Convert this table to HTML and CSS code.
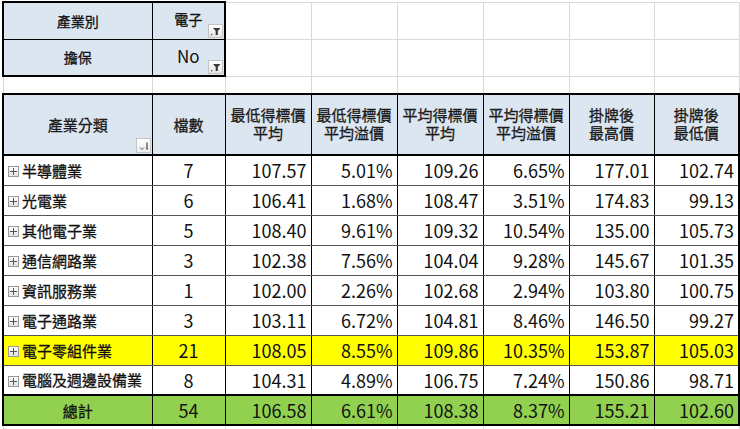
FILE: index.html
```html
<!DOCTYPE html>
<html lang="zh-Hant">
<head>
<meta charset="utf-8">
<title>產業分類</title>
<link rel="stylesheet" href="styles.css">
</head>
<body>
<table class="sheet">
  <colgroup>
    <col class="w-cat"><col class="w-cnt"><col class="w-n"><col class="w-n"><col class="w-n"><col class="w-n"><col class="w-n2"><col class="w-n3">
  </colgroup>
  <tr class="r-pf">
    <td class="pf pf-label">產業別</td>
    <td class="pf pf-value"><span class="cjk">電子</span><span class="filter"><svg width="13" height="12" viewBox="0 0 13 12"><path d="M4 3H11.5L8.8 6V10H6.7V6Z" fill="#3a3a3a"/><rect x="2" y="9" width="1.3" height="1.3" fill="#555"/></svg></span></td>
    <td class="blank"></td><td class="blank"></td><td class="blank"></td><td class="blank"></td><td class="blank"></td><td class="blank"></td>
  </tr>
  <tr class="r-pf">
    <td class="pf pf-label">擔保</td>
    <td class="pf pf-value"><span class="latin">No</span><span class="filter"><svg width="13" height="12" viewBox="0 0 13 12"><path d="M4 3H11.5L8.8 6V10H6.7V6Z" fill="#3a3a3a"/><rect x="2" y="9" width="1.3" height="1.3" fill="#555"/></svg></span></td>
    <td class="blank"></td><td class="blank"></td><td class="blank"></td><td class="blank"></td><td class="blank"></td><td class="blank"></td>
  </tr>
  <tr class="r-gap">
    <td class="blank"></td><td class="blank"></td><td class="blank"></td><td class="blank"></td><td class="blank"></td><td class="blank"></td><td class="blank"></td><td class="blank"></td>
  </tr>
  <tr class="r-head">
    <th class="h h-first">產業分類<span class="sortbtn"><svg width="13" height="13" viewBox="0 0 13 13"><path d="M3 8.5L5 10.5L7 8.5" fill="none" stroke="#555" stroke-width="1"/><path d="M10 3.5V9" stroke="#444" stroke-width="1.2"/><path d="M8.6 9.2H11.4L10 11Z" fill="#444"/></svg></span></th>
    <th class="h">檔數</th>
    <th class="h"><span class="hl">最低得標價</span><span class="hl">平均</span></th>
    <th class="h"><span class="hl">最低得標價</span><span class="hl">平均溢價</span></th>
    <th class="h"><span class="hl">平均得標價</span><span class="hl">平均</span></th>
    <th class="h"><span class="hl">平均得標價</span><span class="hl">平均溢價</span></th>
    <th class="h"><span class="hl">掛牌後</span><span class="hl">最高價</span></th>
    <th class="h h-last"><span class="hl">掛牌後</span><span class="hl">最低價</span></th>
  </tr>
  <tr class="r-data">
    <td class="cat"><span class="plus"></span>半導體業</td><td class="cnt">7</td><td class="num">107.57</td><td class="num">5.01%</td><td class="num">109.26</td><td class="num">6.65%</td><td class="num">177.01</td><td class="num last">102.74</td>
  </tr>
  <tr class="r-data">
    <td class="cat"><span class="plus"></span>光電業</td><td class="cnt">6</td><td class="num">106.41</td><td class="num">1.68%</td><td class="num">108.47</td><td class="num">3.51%</td><td class="num">174.83</td><td class="num last">99.13</td>
  </tr>
  <tr class="r-data">
    <td class="cat"><span class="plus"></span>其他電子業</td><td class="cnt">5</td><td class="num">108.40</td><td class="num">9.61%</td><td class="num">109.32</td><td class="num">10.54%</td><td class="num">135.00</td><td class="num last">105.73</td>
  </tr>
  <tr class="r-data">
    <td class="cat"><span class="plus"></span>通信網路業</td><td class="cnt">3</td><td class="num">102.38</td><td class="num">7.56%</td><td class="num">104.04</td><td class="num">9.28%</td><td class="num">145.67</td><td class="num last">101.35</td>
  </tr>
  <tr class="r-data">
    <td class="cat"><span class="plus"></span>資訊服務業</td><td class="cnt">1</td><td class="num">102.00</td><td class="num">2.26%</td><td class="num">102.68</td><td class="num">2.94%</td><td class="num">103.80</td><td class="num last">100.75</td>
  </tr>
  <tr class="r-data">
    <td class="cat"><span class="plus"></span>電子通路業</td><td class="cnt">3</td><td class="num">103.11</td><td class="num">6.72%</td><td class="num">104.81</td><td class="num">8.46%</td><td class="num">146.50</td><td class="num last">99.27</td>
  </tr>
  <tr class="r-data r-hl">
    <td class="cat"><span class="plus"></span>電子零組件業</td><td class="cnt">21</td><td class="num">108.05</td><td class="num">8.55%</td><td class="num">109.86</td><td class="num">10.35%</td><td class="num">153.87</td><td class="num last">105.03</td>
  </tr>
  <tr class="r-data">
    <td class="cat"><span class="plus"></span>電腦及週邊設備業</td><td class="cnt">8</td><td class="num">104.31</td><td class="num">4.89%</td><td class="num">106.75</td><td class="num">7.24%</td><td class="num">150.86</td><td class="num last">98.71</td>
  </tr>
  <tr class="r-data r-total">
    <td class="cat total-label">總計</td><td class="cnt">54</td><td class="num">106.58</td><td class="num">6.61%</td><td class="num">108.38</td><td class="num">8.37%</td><td class="num">155.21</td><td class="num last">102.60</td>
  </tr>
  <tr class="r-tail">
    <td class="blank"></td><td class="blank"></td><td class="blank"></td><td class="blank"></td><td class="blank"></td><td class="blank"></td><td class="blank"></td><td class="blank"></td>
  </tr>
</table>
</body>
</html>
```

FILE: styles.css
```css
html, body {
  margin: 0;
  padding: 0;
  background: #ffffff;
}
body {
  padding: 1px 0 0 2px;
  font-family: "Noto Sans CJK TC", "Noto Sans", sans-serif;
  color: #111;
  overflow: hidden;
}
.sheet {
  border-collapse: collapse;
  table-layout: fixed;
  width: 736px;
}
.w-cat { width: 149px; }
.w-cnt { width: 73px; }
.w-n { width: 86px; }
.w-n2 { width: 85px; }
.w-n3 { width: 85px; }

td, th {
  padding: 0;
  overflow: hidden;
  white-space: nowrap;
}
.blank {
  border: 1px solid #d9d9d9;
}
.r-pf { height: 37px; }
.r-gap { height: 18px; }
.r-head { height: 61px; }
.r-data { height: 30px; }
.r-tail { height: 10px; }

.pf {
  background: #dce6f1;
  border: 2px solid #000;
  text-align: center;
  font-size: 14px;
  -webkit-text-stroke: 0.3px #111;
}
.pf-value {
  position: relative;
  border-left: 1px solid #000;
}
.pf-label {
  border-right: 1px solid #000;
}
.r-pf:first-child .pf { border-bottom: 1px solid #000; }
.r-pf:nth-child(2) .pf { border-top: 1px solid #000; }
.latin { font-size: 17px; -webkit-text-stroke: 0; }
.pf-value .cjk, .pf-value .latin { position: relative; top: -2px; }

.filter {
  position: absolute;
  right: 1px;
  bottom: 1px;
  width: 15px;
  height: 14px;
  box-sizing: border-box;
  border: 1px solid #c4c4c4;
  background: linear-gradient(#ffffff, #e6e6e6);
  display: flex;
  align-items: center;
  justify-content: center;
  -webkit-text-stroke: 0;
}

.h {
  background: #dce6f1;
  font-family: "Liberation Sans", "Noto Sans CJK TC", sans-serif;
  font-weight: normal;
  font-size: 15px;
  color: #1a1a1a;
  text-align: center;
  border: 1px solid #000;
  border-top: 2px solid #000;
  border-bottom: 2px solid #000;
  -webkit-text-stroke: 0.3px #1a1a1a;
}
.hl {
  display: block;
  height: 18px;
  line-height: 18px;
}
.h-first {
  border-left: 2px solid #000;
  position: relative;
}
.h-last { border-right: 2px solid #000; }
.sortbtn {
  position: absolute;
  right: 1px;
  bottom: 1px;
  width: 15px;
  height: 15px;
  box-sizing: border-box;
  border: 1px solid #c4c4c4;
  background: linear-gradient(#ffffff, #ececec);
  display: flex;
  align-items: center;
  justify-content: center;
  -webkit-text-stroke: 0;
}

.r-data td {
  border-left: 1px solid #000;
  border-right: 1px solid #000;
  border-bottom: 1px solid #555;
  background: #ffffff;
}
.r-data td.cat { border-left: 2px solid #000; }
.r-data td.last { border-right: 2px solid #000; }
.cat {
  font-size: 15px;
  padding-left: 4px !important;
  -webkit-text-stroke: 0.3px #111;
}
.plus {
  display: inline-block;
  vertical-align: middle;
  width: 11px;
  height: 11px;
  box-sizing: border-box;
  margin-right: 3px;
  position: relative;
  top: -1px;
  border: 1px solid #999;
  background:
    linear-gradient(#555, #555) center / 7px 1px no-repeat,
    linear-gradient(#555, #555) center / 1px 7px no-repeat,
    linear-gradient(#ffffff, #e2e2e2);
}
.cnt {
  font-size: 18px;
  text-align: center;
}
.num {
  font-size: 18px;
  text-align: right;
  padding-right: 4px !important;
}
.r-hl td { background: #ffff00; }
.r-total td {
  background: #92d050;
  border-top: 2px solid #000;
  border-bottom: 2px solid #000;
}
.total-label {
  text-align: center;
  padding-left: 0 !important;
}
```
